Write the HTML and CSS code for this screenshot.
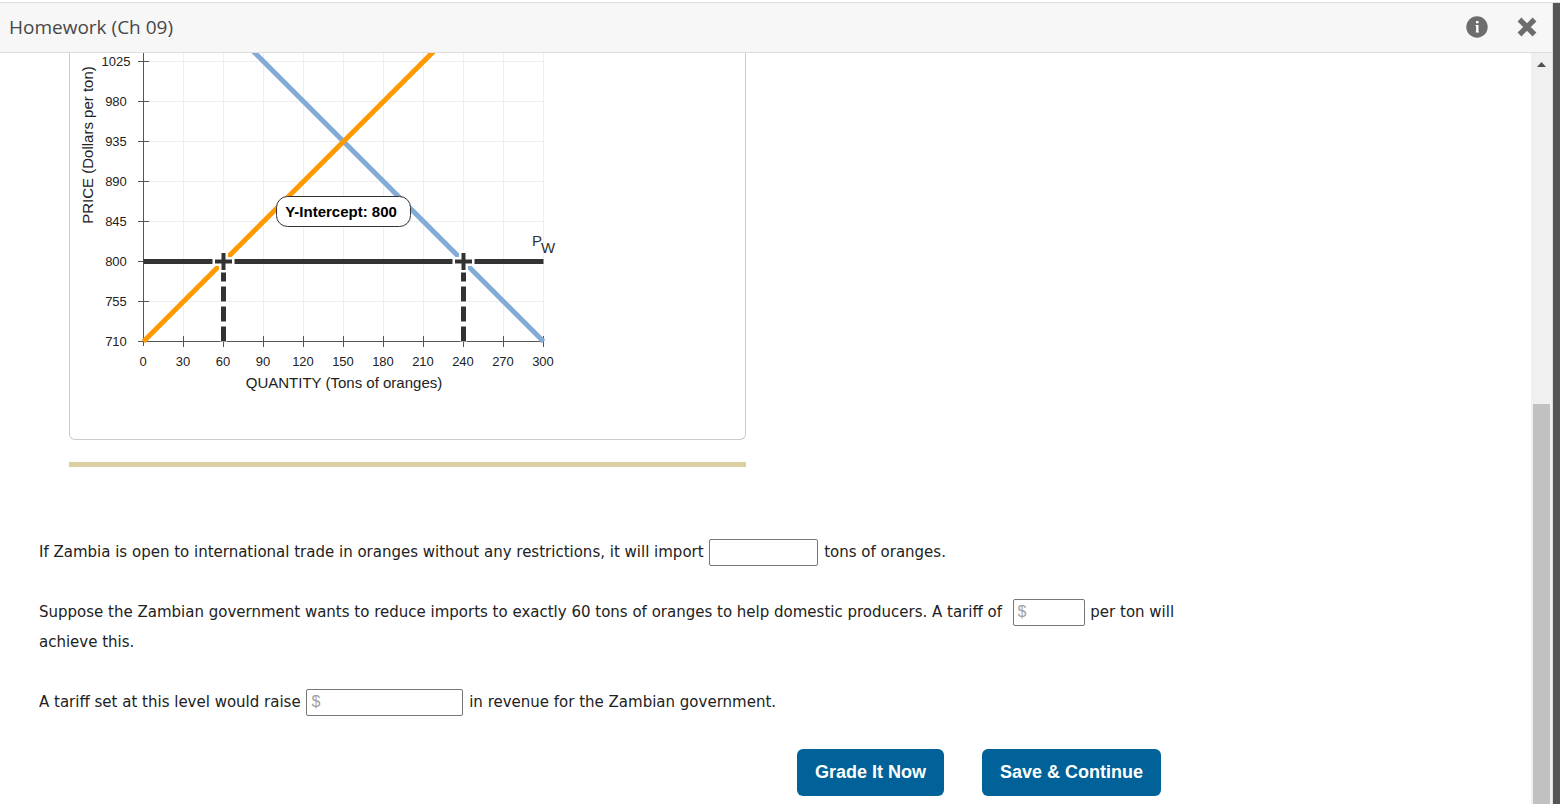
FILE: index.html
```
<!DOCTYPE html>
<html lang="en">
<head>
<meta charset="utf-8">
<title>Homework (Ch 09)</title>
<link rel="stylesheet" href="styles.css">
</head>
<body>
<div class="window">
  <div class="panel">
    <header class="topbar">
      <h1 class="title">Homework (Ch 09)</h1>
      <div class="actions">
        <button class="icon-button" type="button" aria-label="Information">
          <svg width="22" height="22" viewBox="0 0 22 22"><circle cx="11" cy="11" r="10.7" fill="#6d6d6d"/><path d="M10 5h2.500v2.300H10zM9.500 9h3v6.600h.5v1H9.700v-1h.4v-5.600h-.6z" fill="#fff"/></svg>
        </button>
        <button class="icon-button" type="button" aria-label="Close">
          <svg width="22" height="22" viewBox="0 0 22 22"><path d="M3.500 3.500L18.500 18.500M18.500 3.500L3.500 18.500" stroke="#6d6d6d" stroke-width="5.400"/></svg>
        </button>
      </div>
    </header>
    <div class="body">
      <main class="content">
        <section class="graph-card">
          <svg class="graph" width="520" height="350" viewBox="70 53 520 350" role="img" aria-label="Supply and demand for oranges">
            <path class="grid" d="M183.500 53V341M223.500 53V341M263.500 53V341M303.500 53V341M343.500 53V341M383.500 53V341M423.500 53V341M463.500 53V341M503.500 53V341M543.500 53V341M144 61.500H543M144 101.500H543M144 141.500H543M144 181.500H543M144 221.500H543M144 261.500H543M144 301.500H543"/>
            <path class="axis" d="M143.500 53V346M138 341.500H544M138 61.500H149M138 101.500H149M138 141.500H149M138 181.500H149M138 221.500H149M138 261.500H149M138 301.500H149M183.500 336V347M223.500 336V347M263.500 336V347M303.500 336V347M343.500 336V347M383.500 336V347M423.500 336V347M463.500 336V347M503.500 336V347M543.500 336V347"/>
            <path class="demand" d="M245 43L543.500 341.500"/>
            <path class="supply" d="M143.500 341.500L442 43"/>
            <path class="halo" d="M223.500 250V342M463.500 250V342"/>
            <path class="price-line" d="M143.500 261.500H543.500"/>
            <path class="guide" d="M223.500 341.500V272M463.500 341.500V272"/>
            <path class="cross-halo" d="M212.500 261.500H234.500M223.500 251V272.500M452.500 261.500H474.500M463.500 251V272.500"/>
            <path class="cross" d="M215 261.500H232M223.500 253V270M455 261.500H472M463.500 253V270"/>
            <g class="tick-labels">
              <text x="116" y="66">1025</text><text x="116" y="106">980</text><text x="116" y="146">935</text><text x="116" y="186">890</text><text x="116" y="226">845</text><text x="116" y="266">800</text><text x="116" y="306">755</text><text x="116" y="346">710</text>
              <text x="143" y="366">0</text><text x="183" y="366">30</text><text x="223" y="366">60</text><text x="263" y="366">90</text><text x="303" y="366">120</text><text x="343" y="366">150</text><text x="383" y="366">180</text><text x="423" y="366">210</text><text x="463" y="366">240</text><text x="503" y="366">270</text><text x="543" y="366">300</text>
            </g>
            <text class="axis-title" x="344" y="388">QUANTITY (Tons of oranges)</text>
            <text class="axis-title" transform="translate(93 145) rotate(-90)">PRICE (Dollars per ton)</text>
            <text class="curve-label" x="532" y="246">P</text><text class="curve-label" x="541" y="253">W</text>
            <rect class="tip" x="276.500" y="196.500" width="134" height="30" rx="11"/>
            <text class="tip-text" x="341" y="217">Y-Intercept: 800</text>
          </svg>
        </section>
        <hr class="divider">
        <form class="questions">
          <p class="question"><label for="imports">If Zambia is open to international trade in oranges without any restrictions, it will import</label> <input class="blank blank-imports" id="imports" type="text"> tons of oranges.</p>
          <p class="question"><label for="tariff">Suppose the Zambian government wants to reduce imports to exactly 60 tons of oranges to help domestic producers. A tariff of</label>&nbsp; <input class="blank blank-tariff" id="tariff" type="text" placeholder="$"> <span>per ton will</span> <span>achieve this.</span></p>
          <p class="question"><label for="revenue">A tariff set at this level would raise</label> <input class="blank blank-revenue" id="revenue" type="text" placeholder="$"> in revenue for the Zambian government.</p>
          <div class="buttons">
            <button class="button" type="button">Grade It Now</button>
            <button class="button" type="button">Save &amp; Continue</button>
          </div>
        </form>
      </main>
      <div class="scrollbar">
        <svg class="arrow" width="9" height="5" viewBox="0 0 9 5"><path d="M0 5L4.500 0L9 5z" fill="#505050"/></svg>
        <div class="thumb"></div>
      </div>
    </div>
  </div>
  <div class="backdrop"></div>
</div>
</body>
</html>
```
FILE: styles.css
```
* { box-sizing: border-box; }
body { margin: 0; background: #fff; color: #333; font-family: "DejaVu Sans", Verdana, sans-serif; }
.window { display: flex; height: 100vh; padding-top: 2px; overflow: hidden; }
.panel { flex: 1; min-width: 0; display: flex; flex-direction: column; border-top: 1px solid #ddd; border-right: 1px solid #ddd; }
.backdrop { width: 7px; background: #555; border-top: 1px solid #ddd; }
.topbar { display: flex; justify-content: space-between; align-items: center; height: 50px; flex: none; padding: 0 14px 2px 9px; background: #f7f7f7; border-bottom: 1px solid #ddd; }
.title { margin: 0; font: 400 19px/26px "Open Sans", sans-serif; color: #484848; }
.actions { display: flex; gap: 28px; }
.icon-button { display: flex; padding: 0; border: 0; background: none; cursor: pointer; }
.body { flex: 1; min-height: 0; display: flex; }
.content { flex: 1; min-width: 0; overflow: hidden; }
.scrollbar { width: 21px; display: flex; flex-direction: column; align-items: center; padding-top: 9px; background: #f0f0f0; }
.thumb { width: 17px; flex: 1; margin-top: 337px; background: #c1c1c1; }
.graph-card { max-width: 677px; margin-left: 69px; padding-bottom: 36px; border: 1px solid #ccc; border-top: 0; border-radius: 0 0 6px 6px; }
.graph { display: block; }
.divider { max-width: 677px; height: 5px; margin: 22px 0 0 69px; border: 0; background: #dbcfa4; }
.questions { max-width: 1190px; padding: 70px 0 8px 39px; }
.question { margin: 0 0 30px; font-size: 15px; line-height: 30px; color: #222; }
.blank { height: 27px; margin: 0 1px; padding: 0 4px 2px; border: 1px solid #767676; border-radius: 2px; background: #fff; font: 16px "Liberation Sans", Arial, sans-serif; vertical-align: middle; }
.blank::placeholder { color: #a0a0a0; opacity: 1; }
.blank-imports { width: 109px; }
.blank-tariff { width: 72px; }
.blank-revenue { width: 157px; }
.buttons { display: flex; justify-content: flex-end; gap: 38px; padding: 2px 29px 0 0; }
.button { height: 47px; padding: 0 18px; border: 0; border-radius: 6px; background: #006298; color: #fff; font: 700 18px "Liberation Sans", Arial, sans-serif; cursor: pointer; }
.grid { stroke: #eee; stroke-width: 1; fill: none; }
.axis { stroke: #555; stroke-width: 1; fill: none; }
.demand { stroke: #82acd5; stroke-width: 5; }
.supply { stroke: #ff9900; stroke-width: 5; }
.price-line { stroke: #333; stroke-width: 5; }
.halo { stroke: #fff; stroke-width: 6; }
.guide { stroke: #333; stroke-width: 5; stroke-dasharray: 15 5; }
.cross-halo { stroke: #fff; stroke-width: 9; }
.cross { stroke: #333; stroke-width: 4; }
.tick-labels { font: 13px "Liberation Sans", Arial, sans-serif; fill: #222; text-anchor: middle; }
.axis-title { font: 15px "Liberation Sans", Arial, sans-serif; fill: #222; text-anchor: middle; }
.curve-label { font: 15px "Liberation Sans", Arial, sans-serif; fill: #333; }
.tip { fill: #fff; stroke: #333; }
.tip-text { font: 700 15px "Liberation Sans", Arial, sans-serif; fill: #000; text-anchor: middle; }
```
